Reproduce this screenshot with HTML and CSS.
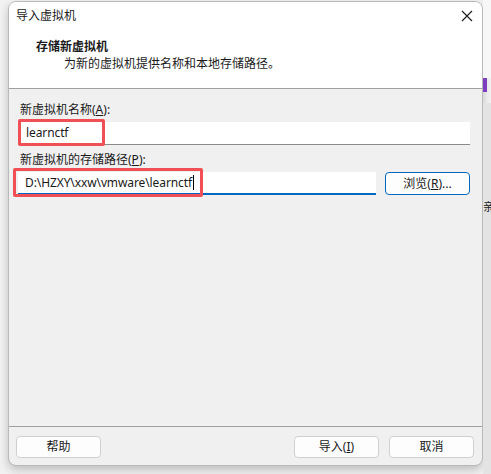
FILE: index.html
```html
<!DOCTYPE html>
<html lang="zh-CN">
<head>
  <meta charset="UTF-8">
  <meta name="viewport" content="width=device-width, initial-scale=1.0">
  <title>导入虚拟机</title>
  <link rel="stylesheet" href="styles.css">
</head>
<body>
  <div class="desk-left"></div>

  <div class="dialog">
    <div class="dialog-head">
      <div class="title-bar">
        <span class="title">导入虚拟机</span>
        <svg class="close" width="12" height="12" viewBox="0 0 12 12">
          <path d="M1 1 L11 11 M11 1 L1 11" stroke="#1a1a1a" stroke-width="1.1" fill="none"/>
        </svg>
      </div>
      <div class="step-title">存储新虚拟机</div>
      <div class="step-desc">为新的虚拟机提供名称和本地存储路径。</div>
    </div>

    <div class="dialog-body">
      <label class="field-label">新虚拟机名称(<u>A</u>):</label>
      <div class="text-box">
        <span class="value">learnctf</span>
        <span class="mark mark-name"></span>
      </div>

      <label class="field-label second">新虚拟机的存储路径(<u>P</u>):</label>
      <div class="path-row">
        <div class="text-box focused">
          <span class="value">D:\HZXY\xxw\vmware\learnctf<span class="caret"></span></span>
          <span class="mark mark-path"></span>
        </div>
        <button class="btn browse">浏览(<u>R</u>)...</button>
      </div>
    </div>

    <div class="dialog-foot">
      <button class="btn">帮助</button>
      <div class="foot-right">
        <button class="btn">导入(<u>I</u>)</button>
        <button class="btn">取消</button>
      </div>
    </div>
  </div>

  <div class="desk-right">
    <div class="strip-top"></div>
    <div class="strip-purple"></div>
    <div class="strip-gray"><span class="strip-char">亲</span></div>
  </div>
</body>
</html>
```

FILE: styles.css
```css
body {
    margin: 0;
    width: 491px;
    height: 474px;
    overflow: hidden;
    display: flex;
    background-color: #f3f3f3;
    font-family: "Noto Sans", "Noto Sans CJK SC", sans-serif;
    font-size: 12px;
    color: #1a1a1a;
}

.desk-left {
    width: 8px;
    background-color: #f2f2f2;
}

.dialog {
    width: 475px;
    height: 465px;
    margin-top: 1px;
    display: flex;
    flex-direction: column;
    background-color: #f0f0f0;
    border: 1px solid #b9b9b9;
    border-radius: 8px;
    box-sizing: border-box;
    overflow: hidden;
    box-shadow: 0 4px 10px rgba(0, 0, 0, 0.22);
}

.dialog-head {
    height: 86px;
    background-color: #ffffff;
    border-bottom: 1px solid #a0a0a0;
}

.title-bar {
    height: 28px;
    display: flex;
    align-items: center;
    justify-content: space-between;
    padding: 0 9px 0 7px;
}
.title {
    line-height: 1;
}
.close {
    display: block;
}

.step-title {
    font-weight: bold;
    padding-left: 27px;
    margin-top: 8px;
    line-height: 17px;
}
.step-desc {
    padding-left: 55px;
    line-height: 17px;
}

.dialog-body {
    flex: 1;
    padding: 12px 12px 0 9px;
}

.field-label {
    display: block;
    line-height: 17px;
    margin-left: 2px;
}
.field-label.second {
    margin-top: 6px;
}
u {
    text-underline-offset: 1px;
}

.text-box {
    position: relative;
    height: 23px;
    margin-top: 4px;
    background-color: #ffffff;
    border-bottom: 1px solid #8a8a8a;
    box-sizing: border-box;
    display: flex;
    align-items: center;
    padding-left: 8px;
    font-size: 12px;
    letter-spacing: -0.1px;
}
.text-box.focused {
    border-bottom: 2px solid #0067c0;
    flex: 1;
    padding-left: 7px;
}
.value {
    line-height: 1;
}
.caret {
    display: inline-block;
    width: 1px;
    height: 15px;
    margin-left: 1px;
    background-color: #000000;
    vertical-align: -3px;
}

.mark {
    position: absolute;
    border: 3px solid #ef4f55;
    border-radius: 2px;
    box-sizing: border-box;
}
.mark-name {
    left: 0;
    top: -3px;
    width: 87px;
    height: 27px;
}
.mark-path {
    left: -5px;
    top: -4px;
    width: 190px;
    height: 29px;
}

.path-row {
    display: flex;
    align-items: flex-end;
    gap: 9px;
}

.btn {
    width: 85px;
    height: 22px;
    padding: 0;
    font-family: "Noto Sans", "Noto Sans CJK SC", sans-serif;
    font-size: 12px;
    color: #1a1a1a;
    background-color: #fdfdfd;
    border: 1px solid #d0d0d0;
    border-radius: 4px;
    line-height: 1;
}
.btn.browse {
    border-color: #0067c0;
    height: 23px;
}

.dialog-foot {
    height: 39px;
    border-top: 1px solid #a0a0a0;
    display: flex;
    justify-content: space-between;
    padding: 9px 8px 0 7px;
    box-sizing: border-box;
}
.foot-right {
    display: flex;
    gap: 10px;
}

.desk-right {
    width: 8px;
    display: flex;
    flex-direction: column;
}
.strip-top {
    height: 78px;
    background-color: #f7f7f7;
}
.strip-purple {
    height: 14px;
    width: 4px;
    background-color: #7b3fbf;
}
.strip-gray {
    flex: 1;
    margin-top: 11px;
    background-color: #e3e3e3;
    padding-top: 98px;
    overflow: hidden;
}
.strip-char {
    display: block;
    font-size: 11px;
    line-height: 1;
}
```
